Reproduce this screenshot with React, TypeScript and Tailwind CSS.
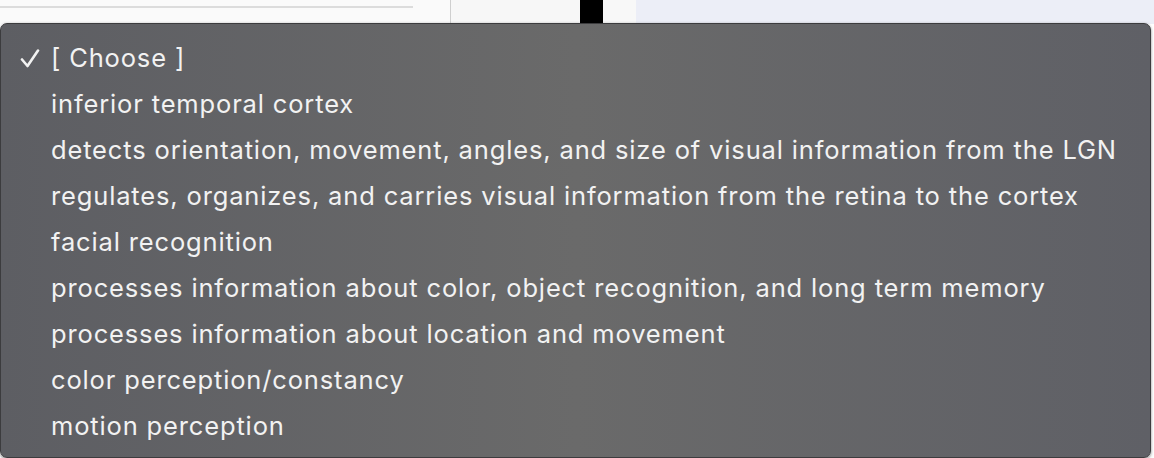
const options = [
  "inferior temporal cortex",
  "detects orientation, movement, angles, and size of visual information from the LGN",
  "regulates, organizes, and carries visual information from the retina to the cortex",
  "facial recognition",
  "processes information about color, object recognition, and long term memory",
  "processes information about location and movement",
  "color perception/constancy",
  "motion perception",
];

const App = () => {
  return (
    <div className="flex h-[458px] w-[1154px] flex-col overflow-hidden bg-white font-['Inter',sans-serif]">
      {/* page behind the open menu */}
      <div className="flex h-[24px] shrink-0">
        <div className="flex w-[451px] flex-col border-r border-[#cfcfcf] bg-[#fafafa] pt-[6px]">
          <div className="h-[2px] w-[413px] bg-[#dcdcdc]" />
        </div>
        <div className="w-[129px] bg-[#f7f7f7]" />
        <div className="w-[23px] bg-black" />
        <div className="w-[33px] bg-[#f8f8f8]" />
        <div className="flex-1 bg-[#eceef7]" />
      </div>

      {/* popup menu */}
      <div className="-mt-[1px] mr-[3px] flex flex-1 flex-col rounded-[7px] border border-[#3c3c3e] bg-gradient-to-r from-[#5d5e63] via-[#6a6a6a] to-[#5f6066] pt-[17px] text-[25.5px] leading-[46px] tracking-[0.85px] text-[#f2f2f2] shadow-[0_1px_3px_rgba(0,0,0,0.5)]">
        <div className="flex h-[34px] items-center">
          <span className="flex w-[50px] justify-start pl-[19px]">
            <svg width="20" height="19" viewBox="0 0 20 19" fill="none">
              <path
                d="M2 10.5 L7.5 17 L18 1.5"
                stroke="#f2f2f2"
                strokeWidth="2.6"
                strokeLinecap="round"
                strokeLinejoin="round"
              />
            </svg>
          </span>
          <span>[ Choose ]</span>
        </div>
        {options.map((o) => (
          <div key={o} className="h-[46px] whitespace-nowrap pl-[50px] leading-[58px]">
            {o}
          </div>
        ))}
      </div>
    </div>
  );
};

export default App;
